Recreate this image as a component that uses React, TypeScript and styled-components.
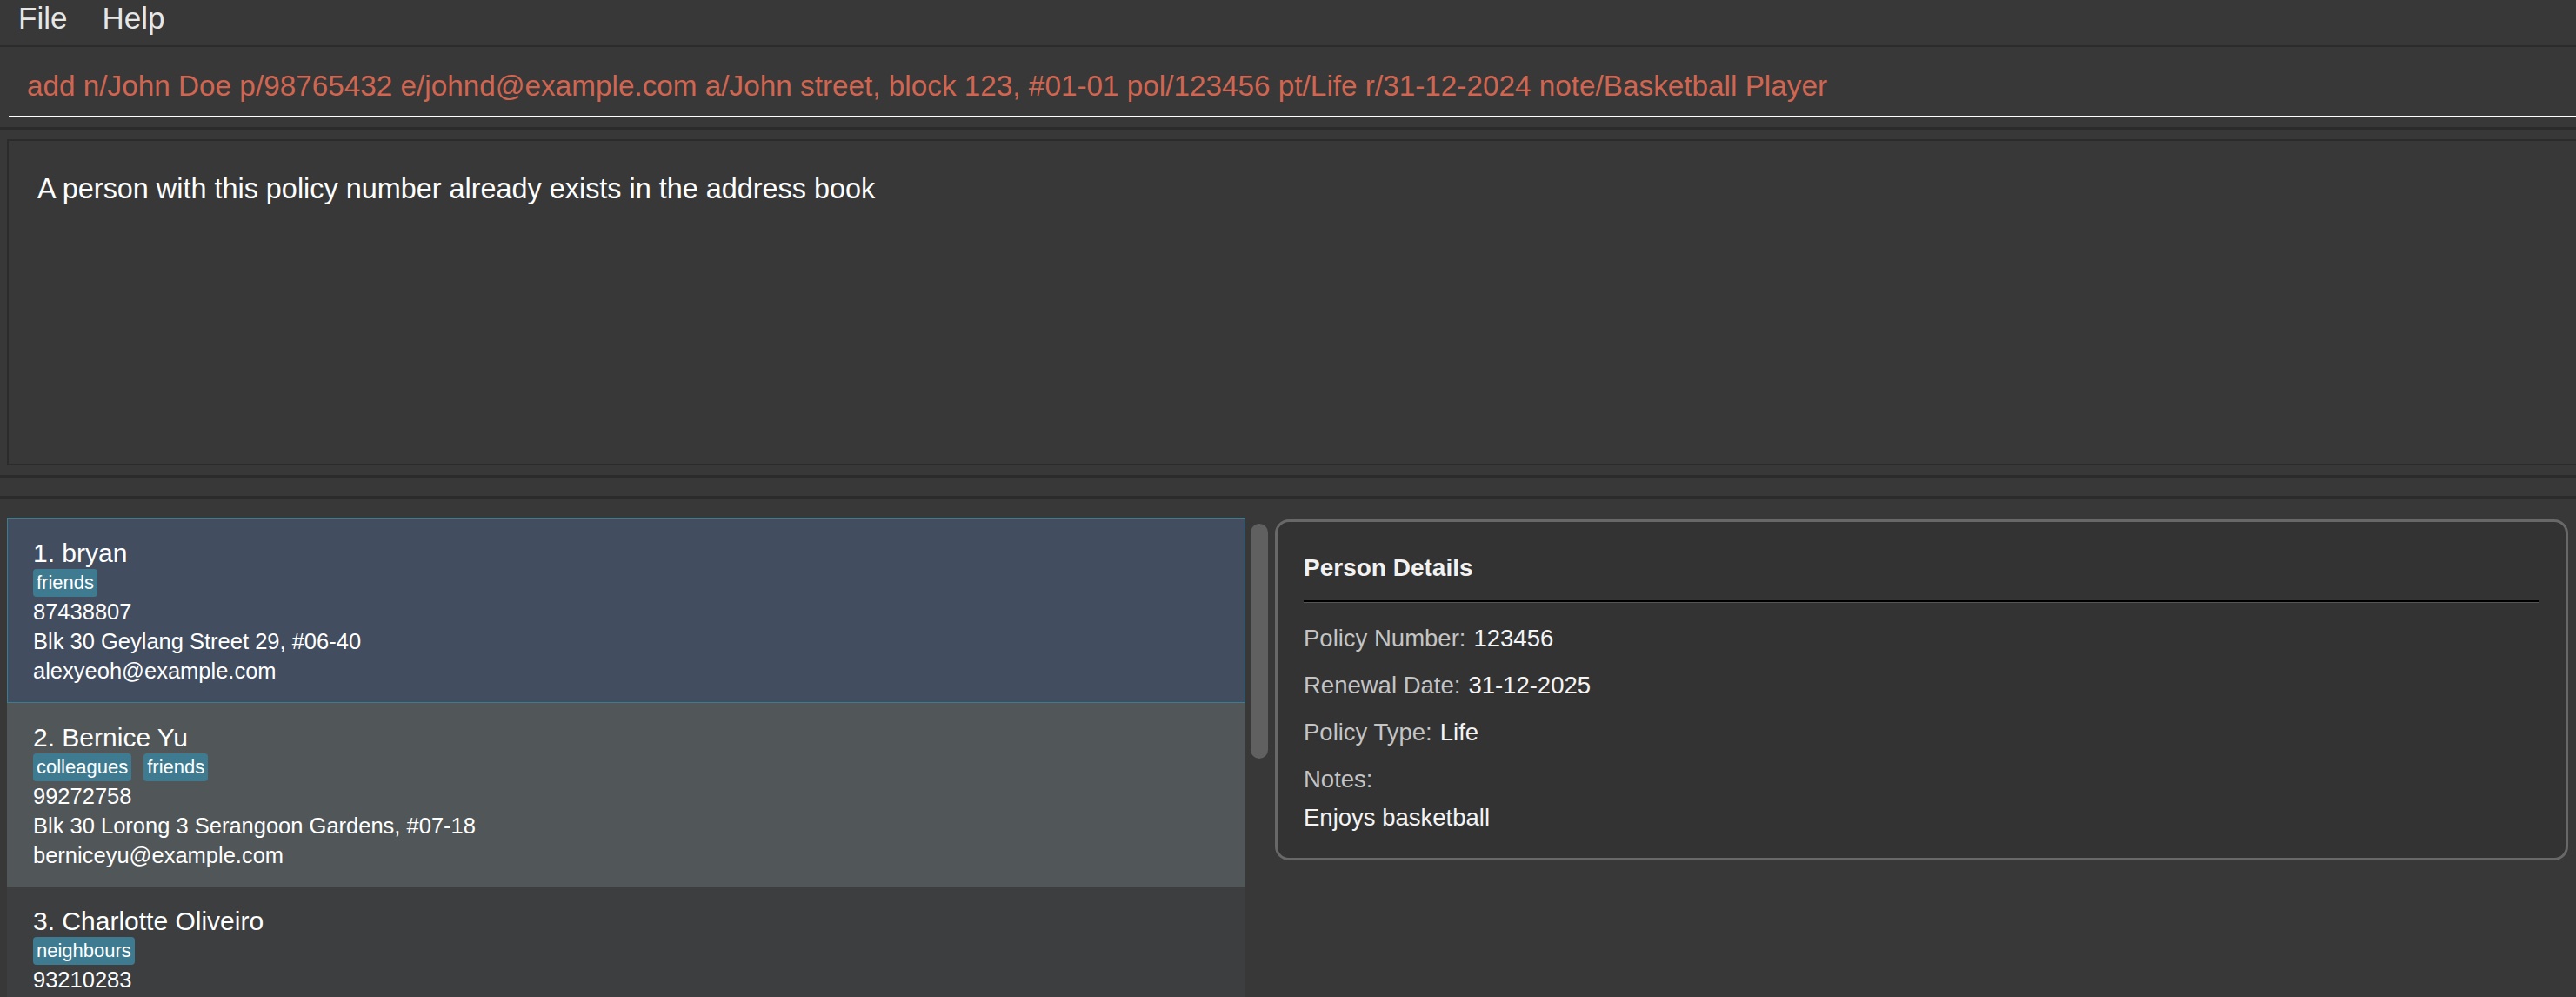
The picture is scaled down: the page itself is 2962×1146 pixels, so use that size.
import styled, { createGlobalStyle } from "styled-components";

const GlobalStyle = createGlobalStyle`
  html, body {
    margin: 0;
    padding: 0;
    background: #383838;
    overflow: hidden;
  }
  body {
    font-family: "Liberation Sans", Arial, sans-serif;
  }
  * {
    box-sizing: border-box;
  }
`;

const Window = styled.div`
  width: 2962px;
  height: 1146px;
  display: flex;
  flex-direction: column;
  background: #383838;
  color: #ffffff;
  overflow: hidden;
`;

const MenuBar = styled.nav`
  height: 54px;
  display: flex;
  padding: 1px 0 0 1px;
  border-bottom: 2px solid #2b2b2b;
`;

const MenuItem = styled.span`
  padding: 0 20px;
  font-size: 35px;
  line-height: 40px;
  color: rgba(255, 255, 255, 0.9);
`;

const CommandPane = styled.div`
  padding: 0 0 11px 10px;
  border-bottom: 4px solid #2b2b2b;
`;

const CommandField = styled.div`
  padding: 26px 0 15px 21px;
  border-bottom: 2px solid #ffffff;
  font-size: 33.3px;
  line-height: 38px;
  color: #d06651;
  white-space: nowrap;
`;

const ResultPane = styled.div`
  padding: 10px 0 11px 8px;
`;

const ResultBox = styled.div`
  height: 375px;
  padding: 37px 33px;
  border: 2px solid #2b2b2b;
  border-right: none;
  font-size: 32.4px;
  line-height: 37px;
  color: #ffffff;
`;

const Splitter = styled.div`
  height: 28px;
  border-top: 4px solid #2b2b2b;
  border-bottom: 4px solid #2b2b2b;
`;

const Main = styled.div`
  flex: 1;
  min-height: 0;
  display: flex;
  padding-top: 21px;
  overflow: hidden;
`;

const PersonList = styled.div`
  width: 1424px;
  margin-left: 8px;
  display: flex;
  flex-direction: column;
`;

const Card = styled.div<{ $selected?: boolean; $odd?: boolean }>`
  flex-shrink: 0;
  padding: 22px 0 19px ${(p) => (p.$selected ? 29 : 30)}px;
  background: ${(p) => (p.$selected ? "#424d5f" : p.$odd ? "#515658" : "#3c3e3f")};
  border: ${(p) => (p.$selected ? "1px solid #3e7b91" : "none")};
  color: #ffffff;
`;

const Name = styled.div`
  font-size: 30px;
  line-height: 36px;
`;

const TagRow = styled.div`
  display: flex;
  gap: 14px;
  height: 32px;
`;

const Tag = styled.span`
  padding: 0 4px;
  font-size: 22px;
  line-height: 32px;
  background: #3e7b91;
  border-radius: 4px;
  color: #ffffff;
`;

const Info = styled.div`
  font-size: 25.5px;
  line-height: 34px;
`;

const ScrollTrack = styled.div`
  width: 30px;
  flex-shrink: 0;
  padding: 7px 4px 0 6px;
`;

const Thumb = styled.div`
  height: 270px;
  background: #606060;
  border-radius: 10px;
`;

const Details = styled.section`
  width: 1487px;
  height: 392px;
  margin: 2px 0 0 4px;
  padding: 37px 30px 29px;
  background: #333333;
  border: 3px solid #686868;
  border-radius: 16px;
`;

const DetailsTitle = styled.h2`
  margin: 0;
  font-size: 28px;
  line-height: 32px;
  font-weight: 700;
  color: #f2f2f2;
`;

const Rule = styled.hr`
  margin: 21px 0 0;
  height: 3px;
  border: none;
  border-top: 2px solid #000000;
  border-bottom: 1px solid #555555;
`;

const DetailList = styled.div`
  margin-top: 25px;
  display: flex;
  flex-direction: column;
  gap: 22px;
`;

const DetailRow = styled.div`
  display: flex;
  gap: 9px;
  font-size: 27.5px;
  line-height: 32px;
`;

const NoteBlock = styled.div`
  display: flex;
  flex-direction: column;
  gap: 12px;
  font-size: 27.5px;
  line-height: 32px;
`;

const Label = styled.span`
  color: #c4c4c4;
`;

const Value = styled.span`
  color: #f4f4f4;
`;

interface Person {
  name: string;
  tags: string[];
  phone: string;
  address: string;
  email: string;
}

const persons: Person[] = [
  {
    name: "bryan",
    tags: ["friends"],
    phone: "87438807",
    address: "Blk 30 Geylang Street 29, #06-40",
    email: "alexyeoh@example.com",
  },
  {
    name: "Bernice Yu",
    tags: ["colleagues", "friends"],
    phone: "99272758",
    address: "Blk 30 Lorong 3 Serangoon Gardens, #07-18",
    email: "berniceyu@example.com",
  },
  {
    name: "Charlotte Oliveiro",
    tags: ["neighbours"],
    phone: "93210283",
    address: "Blk 11 Ang Mo Kio Street 74, #11-04",
    email: "charlotte@example.com",
  },
];

const App = () => {
  return (
    <Window>
      <GlobalStyle />
      <MenuBar>
        <MenuItem>File</MenuItem>
        <MenuItem>Help</MenuItem>
      </MenuBar>
      <CommandPane>
        <CommandField>
          add n/John Doe p/98765432 e/johnd@example.com a/John street, block 123, #01-01 pol/123456 pt/Life
          r/31-12-2024 note/Basketball Player
        </CommandField>
      </CommandPane>
      <ResultPane>
        <ResultBox>A person with this policy number already exists in the address book</ResultBox>
      </ResultPane>
      <Splitter />
      <Main>
        <PersonList>
          {persons.map((p, i) => (
            <Card key={p.name} $selected={i === 0} $odd={i % 2 === 1}>
              <Name>
                {i + 1}. {p.name}
              </Name>
              <TagRow>
                {p.tags.map((t) => (
                  <Tag key={t}>{t}</Tag>
                ))}
              </TagRow>
              <Info>{p.phone}</Info>
              <Info>{p.address}</Info>
              <Info>{p.email}</Info>
            </Card>
          ))}
        </PersonList>
        <ScrollTrack>
          <Thumb />
        </ScrollTrack>
        <Details>
          <DetailsTitle>Person Details</DetailsTitle>
          <Rule />
          <DetailList>
            <DetailRow>
              <Label>Policy Number:</Label>
              <Value>123456</Value>
            </DetailRow>
            <DetailRow>
              <Label>Renewal Date:</Label>
              <Value>31-12-2025</Value>
            </DetailRow>
            <DetailRow>
              <Label>Policy Type:</Label>
              <Value>Life</Value>
            </DetailRow>
            <NoteBlock>
              <Label>Notes:</Label>
              <Value>Enjoys basketball</Value>
            </NoteBlock>
          </DetailList>
        </Details>
      </Main>
    </Window>
  );
};

export default App;
